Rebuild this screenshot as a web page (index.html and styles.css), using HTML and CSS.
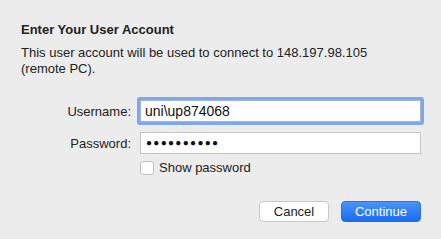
FILE: index.html
```html
<!DOCTYPE html>
<html>
<head>
<meta charset="utf-8">
<link rel="stylesheet" href="styles.css">
</head>
<body>
<div class="dialog">
  <h1 class="title">Enter Your User Account</h1>
  <p class="desc">This user account will be used to connect to 148.197.98.105 (remote PC).</p>
  <div class="form">
    <label class="label">Username:</label>
    <div class="field focused">uni\up874068</div>
    <label class="label">Password:</label>
    <div class="field dots">●●●●●●●●●●</div>
    <div></div>
    <div class="check-row"><span class="checkbox"></span><span>Show password</span></div>
  </div>
  <div class="buttons">
    <button class="btn cancel">Cancel</button>
    <button class="btn primary">Continue</button>
  </div>
</div>
</body>
</html>
```
FILE: styles.css
```css
html, body {
  margin: 0;
  padding: 0;
  background: #ececec;
}
body {
  font-family: "Liberation Sans", Arial, sans-serif;
  font-size: 13px;
  color: #222;
  width: 441px;
  height: 239px;
  overflow: hidden;
}
.dialog {
  padding: 22px 20px 0 21px;
}
.title {
  margin: 0;
  font-size: 13px;
  font-weight: bold;
  line-height: 16px;
  color: #222;
}
.desc {
  margin: 7px 0 0 0;
  line-height: 16px;
  width: 380px;
}
.form {
  display: grid;
  grid-template-columns: 110px 281px;
  column-gap: 9px;
  row-gap: 10px;
  margin-top: 23px;
  align-items: center;
}
.label {
  text-align: right;
}
.field {
  height: 22px;
  box-sizing: border-box;
  border: 1px solid #c4c4c4;
  background: #fff;
  padding: 0 4px;
  line-height: 20px;
  font-size: 14px;
  color: #111;
}
.field.focused {
  border-color: #a0b4d6;
  box-shadow: 0 0 0 3px #7ea7ee;
  border-radius: 1px;
}
.dots {
  font-size: 10px;
  letter-spacing: 1.3px;
  padding-left: 5px;
}
.check-row {
  display: flex;
  align-items: center;
  gap: 5px;
  margin-top: -4px;
}
.checkbox {
  width: 12px;
  height: 12px;
  border: 1px solid #bdbdbd;
  border-radius: 3px;
  background: #fff;
}
.buttons {
  display: flex;
  justify-content: flex-end;
  gap: 12px;
  margin-top: 26px;
}
.btn {
  font-family: "Liberation Sans", Arial, sans-serif;
  font-size: 13px;
  height: 21px;
  padding: 0;
  border-radius: 4px;
}
.cancel {
  width: 70px;
  background: #fff;
  border: 1px solid #c8c8c8;
  color: #222;
}
.primary {
  width: 80px;
  border: 1px solid #2a6ee8;
  background: linear-gradient(#4b93f8, #1a6cf4);
  color: #fff;
}
```
